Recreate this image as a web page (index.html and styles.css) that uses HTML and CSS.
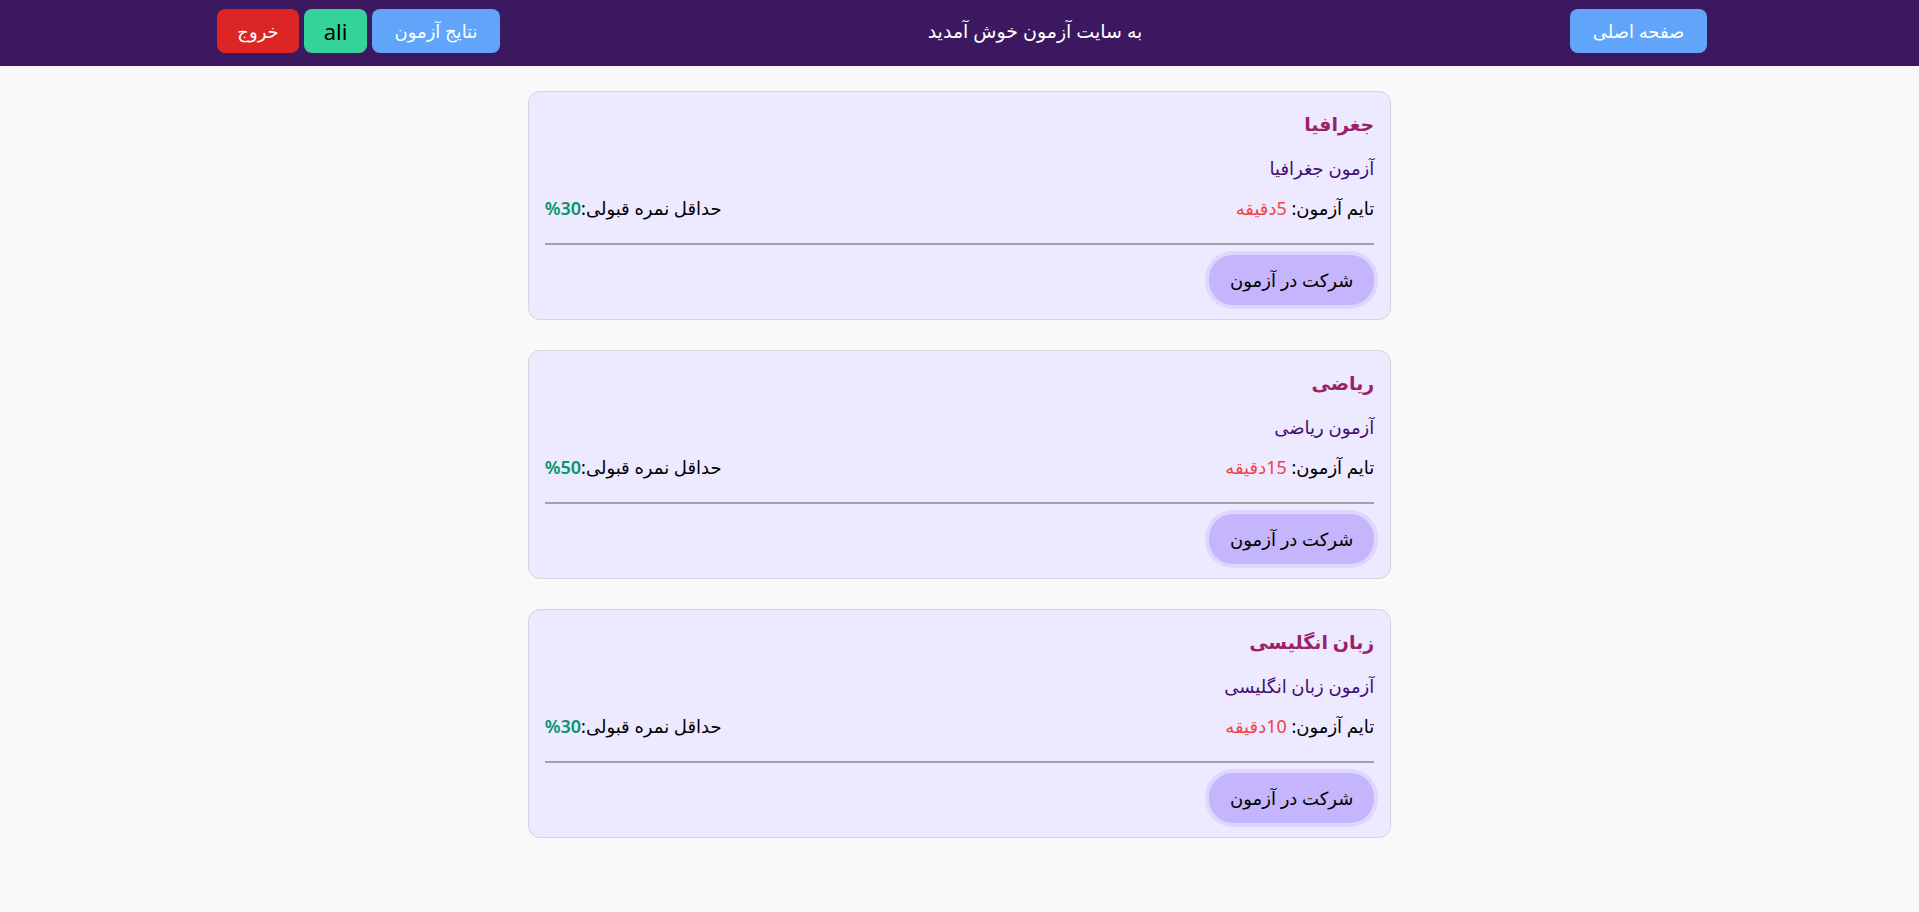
FILE: index.html
```html
<!DOCTYPE html>
<html lang="fa" dir="rtl">
<head>
<meta charset="utf-8">
<title>آزمون</title>
<link rel="stylesheet" href="styles.css">
</head>
<body>
<header class="topbar">
  <a class="btn btn-blue btn-home" href="#">صفحه اصلی</a>
  <div class="welcome">به سایت آزمون خوش آمدید</div>
  <div class="user-actions">
    <a class="btn btn-blue" href="#">نتایج آزمون</a>
    <span class="btn btn-green user">ali</span>
    <a class="btn btn-red" href="#">خروج</a>
  </div>
</header>
<main class="list">
  <section class="card">
    <h2 class="card-title">جغرافیا</h2>
    <p class="card-desc">آزمون جغرافیا</p>
    <div class="card-meta">
      <span>تایم آزمون: <span class="time">5دقیقه</span></span>
      <span>حداقل نمره قبولی:<span class="pass">30%</span></span>
    </div>
    <hr class="divider">
    <div class="card-actions"><button class="join">شرکت در آزمون</button></div>
  </section>
  <section class="card">
    <h2 class="card-title">ریاضی</h2>
    <p class="card-desc">آزمون ریاضی</p>
    <div class="card-meta">
      <span>تایم آزمون: <span class="time">15دقیقه</span></span>
      <span>حداقل نمره قبولی:<span class="pass">50%</span></span>
    </div>
    <hr class="divider">
    <div class="card-actions"><button class="join">شرکت در آزمون</button></div>
  </section>
  <section class="card">
    <h2 class="card-title">زبان انگلیسی</h2>
    <p class="card-desc">آزمون زبان انگلیسی</p>
    <div class="card-meta">
      <span>تایم آزمون: <span class="time">10دقیقه</span></span>
      <span>حداقل نمره قبولی:<span class="pass">30%</span></span>
    </div>
    <hr class="divider">
    <div class="card-actions"><button class="join">شرکت در آزمون</button></div>
  </section>
</main>
</body>
</html>
```
FILE: styles.css
```css
* { box-sizing: border-box; }
body {
  margin: 0;
  background: #f9f9f9;
  font-family: "Noto Sans", "DejaVu Sans", sans-serif;
  color: #000;
}
.topbar {
  background: #3b1860;
  display: flex;
  align-items: center;
  justify-content: space-between;
  padding: 9px 212px 13px 217px;
}
.btn {
  display: inline-flex;
  align-items: center;
  justify-content: center;
  height: 44px;
  padding: 0 16px;
  border-radius: 8px;
  color: #fff;
  text-decoration: none;
  font-size: 18px;
}
.btn-blue { background: #60a5fa; }
.btn-green { background: #34d399; }
.btn-red { background: #dc2626; }
.btn-home { width: 137px; }
.user { color: #000; font-size: 22px; width: 63px; }
.welcome { color: #fff; font-size: 19px; }
.user-actions { display: flex; gap: 5px; }
.user-actions .btn-blue { width: 128px; }
.user-actions .btn-red { width: 82px; }
.list {
  padding-top: 25px;
  display: flex;
  flex-direction: column;
  align-items: center;
  gap: 30px;
}
.card {
  width: 45%;
  background: #ede9fe;
  border: 1px solid #d4d4dc;
  border-radius: 12px;
  padding: 16px 16px 14px;
}
.card-title {
  margin: 0;
  font-size: 19px;
  font-weight: 600;
  line-height: 32px;
  color: #9b1f69;
}
.card-desc {
  margin: 14px 0 0;
  font-size: 18px;
  line-height: 28px;
  color: #3f0f6e;
}
.card-meta {
  margin-top: 12px;
  display: flex;
  justify-content: space-between;
  font-size: 18px;
  line-height: 28px;
}
.time { color: #ef4444; }
.pass { color: #059669; font-weight: 600; }
.divider {
  margin: 21px 0 10px;
  border: 0;
  border-top: 2px solid #9ca3af;
}
.card-actions { display: flex; }
.join {
  height: 50px;
  padding: 0 21px;
  border: 0;
  border-radius: 24px;
  background: #c4b5fd;
  box-shadow: 0 0 0 4px #ddd6fe;
  font-family: inherit;
  font-size: 18px;
  color: #000;
}
```
